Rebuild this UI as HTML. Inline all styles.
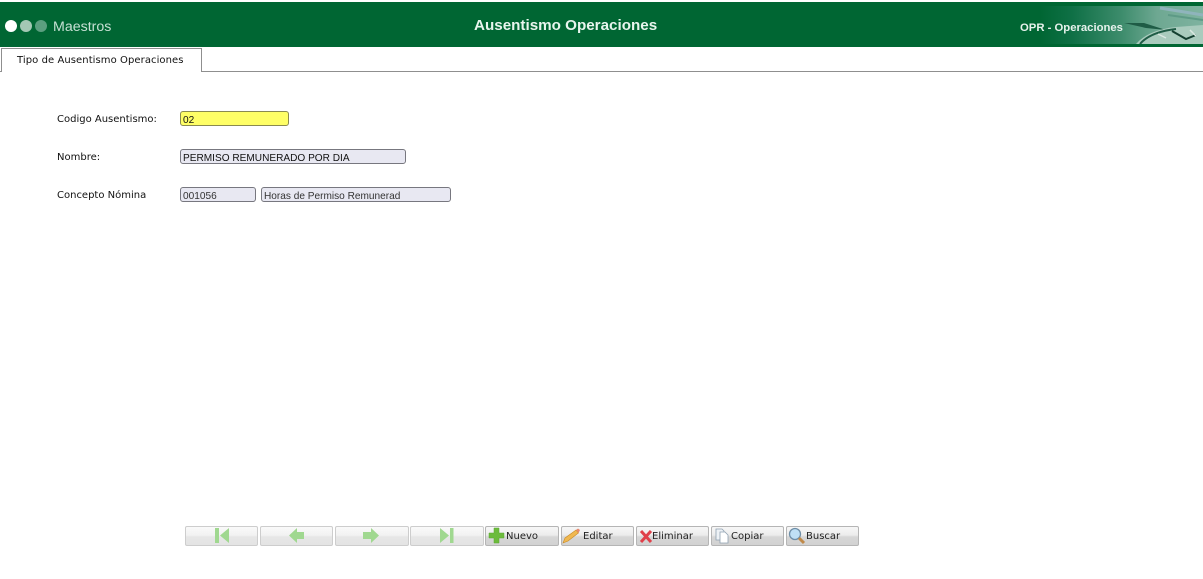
<!DOCTYPE html>
<html><head><meta charset="utf-8">
<style>
html,body{margin:0;padding:0;background:#fff;width:1203px;height:579px;overflow:hidden;position:relative}
*{box-sizing:border-box}
.abs{position:absolute;white-space:nowrap}
.hd{position:absolute;left:0;top:2px;width:1203px;height:45px;background:#006633}
.art{position:absolute;left:1040px;top:6px;width:163px;height:38px;background:linear-gradient(90deg,#006633 0%,#0f7046 20%,#3d8c6c 50%,#6ea892 72%,#7fb3a0 100%)}
.dot{position:absolute;border-radius:50%;width:12px;height:12px;top:20px}
.lab{position:absolute;font:10px "DejaVu Sans",sans-serif;color:#111;white-space:nowrap}
.inp{position:absolute;height:15px;border:1px solid #77777f;border-radius:3px;background:#e8e8f2;font:10.1px/18px "Liberation Sans",sans-serif;color:#111;padding-left:2px;white-space:nowrap;overflow:hidden}
.btn{position:absolute;top:526px;height:20px;border:1px solid #b5b5b5;border-radius:2px;background:linear-gradient(180deg,#f7f7f7 0%,#ececec 45%,#d6d6d6 55%,#d2d2d2 100%);font:10px/19px "DejaVu Sans",sans-serif;color:#222}
.dis{background:linear-gradient(180deg,#fafafa 0%,#f2f2f2 45%,#e6e6e6 55%,#e4e4e4 100%);border-color:#cdcdcd}
.btn svg{position:absolute;left:0;top:0}
.btn span{position:absolute;top:0;white-space:nowrap}
</style></head><body>
<div class="hd"></div>
<div class="art">
<svg width="163" height="38" style="position:absolute;left:0;top:0">
<path d="M84 17 L104 17 L126 24 L106 22 Z" fill="#1f5c46"/>
<path d="M96 38 Q108 24 136 21 L163 19 L163 38 Z" fill="#a9cbbd"/>
<path d="M100 38 Q110 26 136 23" stroke="#1f5c46" stroke-width="2" fill="none"/>
<path d="M132 25 L146 33 L156 29" stroke="#143f30" stroke-width="2" fill="none"/>
<path d="M118 28 L126 32 M150 24 L156 30" stroke="#d9e8e1" stroke-width="1.5" fill="none"/>
<path d="M120 2 L163 9" stroke="#8fb4bc" stroke-width="3" fill="none"/>
<path d="M128 9 L163 14" stroke="#5d9a86" stroke-width="2" fill="none"/>
</svg>
</div>
<div class="dot" style="left:5px;background:#fff"></div>
<div class="dot" style="left:20px;background:#a4c8b5"></div>
<div class="dot" style="left:35px;background:#5c9f80"></div>
<div class="abs" style="left:53px;top:19px;font:14.2px/17px 'Liberation Sans',sans-serif;color:#c5e0d3">Maestros</div>
<div class="abs" style="left:474px;top:17px;font:bold 15.2px/18px 'Liberation Sans',sans-serif;color:#e8f5ee">Ausentismo Operaciones</div>
<div class="abs" style="left:1020px;top:21px;font:bold 11.3px/14px 'Liberation Sans',sans-serif;color:#e6f2ec">OPR - Operaciones</div>

<div style="position:absolute;left:0;top:71px;width:1203px;height:1px;background:#8f8f8f"></div>
<div style="position:absolute;left:1px;top:48px;width:201px;height:24px;background:#fff;border:1px solid #8f8f8f;border-bottom:0"></div>
<div class="lab" style="left:17px;top:55px;line-height:12px;letter-spacing:.07px">Tipo de Ausentismo Operaciones</div>

<div class="lab" style="left:57px;top:114px;line-height:12px">Codigo Ausentismo:</div>
<div class="lab" style="left:57px;top:152px;line-height:12px">Nombre:</div>
<div class="lab" style="left:57px;top:190px;line-height:12px">Concepto Nómina</div>

<div class="inp" style="left:180px;top:111px;width:109px;background:#ffff66;border-color:#8a8a50">02</div>
<div class="inp" style="left:180px;top:149px;width:226px">PERMISO REMUNERADO POR DIA</div>
<div class="inp" style="left:180px;top:187px;width:76px;color:#333">001056</div>
<div class="inp" style="left:261px;top:187px;width:190px;color:#333">Horas de Permiso Remunerad</div>

<div class="btn dis" style="left:185px;width:73px"><svg width="73" height="18"><rect x="29" y="1" width="4" height="15" fill="#a0d890"/><path d="M43 1 L34 8.5 L43 16 Z" fill="#a0d890"/></svg></div>
<div class="btn dis" style="left:260px;width:73px"><svg width="73" height="18"><path d="M28 8.5 L36 1 L36 5 L43 5 L43 12 L36 12 L36 16 Z" fill="#a0d890"/></svg></div>
<div class="btn dis" style="left:335px;width:74px"><svg width="74" height="18"><path d="M43 8.5 L35 1 L35 5 L27 5 L27 12 L35 12 L35 16 Z" fill="#a0d890"/></svg></div>
<div class="btn dis" style="left:410px;width:74px"><svg width="74" height="18"><path d="M29 1 L38 8.5 L29 16 Z" fill="#a0d890"/><rect x="39" y="1" width="3.5" height="15" fill="#a0d890"/></svg></div>

<div class="btn" style="left:485px;width:74px"><svg width="20" height="18"><path d="M8 1 H13 V6 H18 V11 H13 V16 H8 V11 H3 V6 H8 Z" fill="#6cbb3c" stroke="#5aa830" stroke-width=".5"/></svg><span style="left:20px">Nuevo</span></div>
<div class="btn" style="left:561px;width:73px"><svg width="22" height="18"><path d="M1 16 L3 11 L14 3 L16.5 6 L6 14 Z" fill="#f0b850" stroke="#c98a25" stroke-width=".6"/><path d="M14 3 L16.5 6 L18 3 L16 1.5 Z" fill="#e88a70"/></svg><span style="left:21px">Editar</span></div>
<div class="btn" style="left:636px;width:73px"><svg width="18" height="18"><path d="M4 4 L14 15 M14 4 L4 15" stroke="#e0404a" stroke-width="3" fill="none"/></svg><span style="left:15px">Eliminar</span></div>
<div class="btn" style="left:711px;width:73px"><svg width="20" height="18"><path d="M4 2 H10 L12 4 V13 H4 Z" fill="#eef2f6" stroke="#8fa0b0" stroke-width=".8"/><path d="M8 5 H13 L16 8 V16 H8 Z" fill="#fff" stroke="#8fa0b0" stroke-width=".8"/></svg><span style="left:19px">Copiar</span></div>
<div class="btn" style="left:786px;width:73px"><svg width="20" height="18"><circle cx="8" cy="7" r="5.5" fill="#bfe0f5" stroke="#6f8fa8" stroke-width="1.3"/><path d="M12 11 L17 16" stroke="#c08a4a" stroke-width="3"/></svg><span style="left:19px">Buscar</span></div>
</body></html>
